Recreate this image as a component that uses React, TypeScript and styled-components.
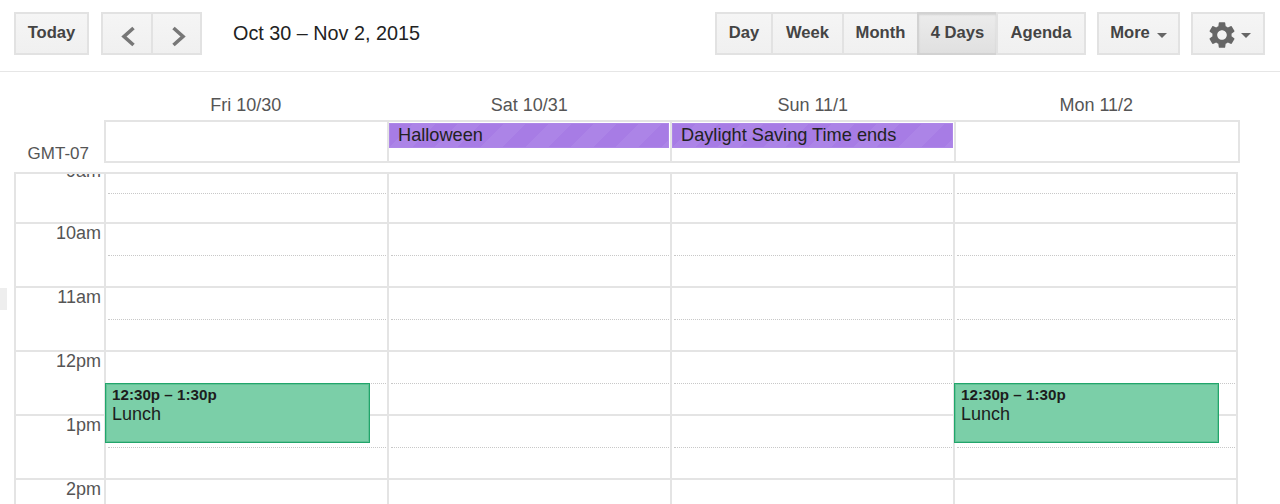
import React from 'react';
import styled, { createGlobalStyle } from 'styled-components';
import { MdSettings } from 'react-icons/md';

const GlobalStyle = createGlobalStyle`
  html, body {
    margin: 0;
    padding: 0;
    background: #fff;
  }
`;

const Page = styled.div`
  position: relative;
  display: flex;
  flex-direction: column;
  width: 1280px;
  height: 504px;
  overflow: hidden;
  background: #fff;
  font-family: "Liberation Sans", Arial, sans-serif;
  color: #222;
`;

const Toolbar = styled.div`
  display: flex;
  flex: none;
  align-items: flex-start;
  height: 72px;
  padding: 12px 15px 0 14px;
  box-sizing: border-box;
  border-bottom: 1px solid #e6e6e6;
`;

const Button = styled.div<{ $width: number; $active?: boolean }>`
  display: flex;
  align-items: center;
  justify-content: center;
  flex: none;
  width: ${({ $width }) => $width}px;
  height: 43px;
  padding-bottom: 1px;
  box-sizing: border-box;
  border: 2px solid ${({ $active }) => ($active ? '#d2d2d2' : '#e2e2e2')};
  background: ${({ $active }) =>
    $active ? 'linear-gradient(#ececec, #e0e0e0)' : 'linear-gradient(#f5f5f5, #f0f0f0)'};
  box-shadow: ${({ $active }) => ($active ? 'inset 0 1px 2px rgba(0, 0, 0, 0.1)' : 'none')};
  font-size: 16.6px;
  font-weight: bold;
  color: #444;
`;

const ButtonGroup = styled.div<{ $gap?: number }>`
  display: flex;
  flex: none;
  margin-left: ${({ $gap }) => $gap ?? 0}px;

  ${Button} + ${Button} {
    margin-left: -2px;
  }
`;

const DateRange = styled.div`
  margin-left: 31px;
  line-height: 43px;
  font-size: 19.8px;
  color: #222;
`;

const RightTools = styled.div`
  display: flex;
  margin-left: auto;
`;

const Caret = styled.span<{ $gap: number }>`
  display: inline-block;
  width: 0;
  height: 0;
  margin-left: ${({ $gap }) => $gap}px;
  margin-top: 4px;
  border-top: 5px solid #666;
  border-left: 5px solid transparent;
  border-right: 5px solid transparent;
`;

const Chevron = styled.svg<{ $shift: number }>`
  width: 15px;
  height: 21px;
  margin-top: 6px;
  margin-left: ${({ $shift }) => $shift}px;
  fill: none;
  stroke: #777;
  stroke-width: 3.6;
`;

const GearIcon = styled(MdSettings)`
  margin-top: 3px;
  color: #666;
`;

const SidebarTab = styled.div`
  position: absolute;
  left: 0;
  top: 288px;
  width: 7px;
  height: 22px;
  background: #eee;
`;

const DayHeads = styled.div`
  display: grid;
  flex: none;
  grid-template-columns: repeat(4, 283.5px);
  height: 48px;
  padding-left: 104px;
  box-sizing: border-box;
`;

const DayHead = styled.div`
  padding-top: 22px;
  text-align: center;
  font-size: 18px;
  line-height: 22px;
  color: #555;
`;

const AllDayRow = styled.div`
  display: flex;
  flex: none;
  height: 43px;
`;

const ZoneLabel = styled.div`
  display: flex;
  align-items: flex-end;
  justify-content: flex-end;
  flex: none;
  width: 89px;
  margin-right: 15px;
  font-size: 17px;
  line-height: 18px;
  color: #555;
`;

const AllDayBox = styled.div`
  display: grid;
  grid-template-columns: 283px 283px 284px 284px;
  width: 1136px;
  box-sizing: border-box;
  border: 2px solid #e4e4e4;
  border-left: 0;
`;

const AllDayCell = styled.div`
  padding: 1px 1px 0 0;
  border-left: 2px solid #e4e4e4;
`;

const AllDayChip = styled.div`
  height: 25px;
  padding-left: 8px;
  box-sizing: border-box;
  background: repeating-linear-gradient(135deg, #a77ce5 0 16px, #ac84e7 16px 32px);
  border: 1px solid #ae87e8;
  font-size: 18.2px;
  line-height: 23px;
  color: #222;
`;

const Scroller = styled.div`
  flex: 1;
  width: 1224px;
  margin: 9px 0 0 14px;
  box-sizing: border-box;
  overflow: hidden;
  border: 2px solid #e4e4e4;
  border-bottom: 0;
`;

const TimeGrid = styled.div`
  display: grid;
  grid-template-columns: 88px repeat(4, 283px);
  margin-top: -18px;
`;

const Gutter = styled.div`
  display: flex;
  flex-direction: column;
`;

const HourLabel = styled.div<{ $first?: boolean }>`
  height: ${({ $first }) => ($first ? 66 : 64)}px;
  padding: ${({ $first }) => ($first ? 4 : 0)}px 3px 0 0;
  box-sizing: border-box;
  border-top: 2px solid #e4e4e4;
  text-align: right;
  font-size: 18px;
  line-height: 18px;
  color: #555;
`;

const DayColumn = styled.div`
  position: relative;
  display: flex;
  flex-direction: column;
  border-left: 2px solid #e4e4e4;
`;

const HourSlot = styled.div<{ $first?: boolean }>`
  height: ${({ $first }) => ($first ? 66 : 64)}px;
  box-sizing: border-box;
  border-top: 2px solid #e4e4e4;
`;

const HalfLine = styled.div<{ $first?: boolean }>`
  height: ${({ $first }) => ($first ? 35 : 31)}px;
  margin: 0 1px 0 2px;
  border-bottom: 1px dotted #c8c8c8;
`;

const EventCard = styled.div`
  position: absolute;
  left: -1px;
  top: 227px;
  width: 265px;
  height: 60px;
  padding: 2px 6px;
  box-sizing: border-box;
  background: #7bcfa8;
  border: 1px solid #22a56b;
  box-shadow: inset 0 0 0 1px rgba(34, 165, 107, 0.3);
  color: #1d1d1d;
`;

const EventTime = styled.div`
  font-size: 15.2px;
  font-weight: bold;
  line-height: 18px;
`;

const EventTitle = styled.div`
  font-size: 18px;
  line-height: 20px;
`;

const days = ['Fri 10/30', 'Sat 10/31', 'Sun 11/1', 'Mon 11/2'];
const hours = ['9am', '10am', '11am', '12pm', '1pm', '2pm'];
const allDayEvents: Record<number, string> = {
  1: 'Halloween',
  2: 'Daylight Saving Time ends',
};
const lunchDays = [0, 3];

const App: React.FC = () => {
  return (
    <Page>
      <GlobalStyle />
      <Toolbar>
        <Button $width={75}>Today</Button>
        <ButtonGroup $gap={12}>
          <Button $width={52}>
            <Chevron viewBox="0 0 15 21" $shift={2}>
              <polyline points="12.5,2 3,10.5 12.5,19" />
            </Chevron>
          </Button>
          <Button $width={51}>
            <Chevron viewBox="0 0 15 21" $shift={4}>
              <polyline points="2.5,2 12,10.5 2.5,19" />
            </Chevron>
          </Button>
        </ButtonGroup>
        <DateRange>Oct 30 – Nov 2, 2015</DateRange>
        <RightTools>
          <ButtonGroup>
            <Button $width={58}>Day</Button>
            <Button $width={73}>Week</Button>
            <Button $width={77}>Month</Button>
            <Button $width={81} $active>4 Days</Button>
            <Button $width={90}>Agenda</Button>
          </ButtonGroup>
          <ButtonGroup $gap={11}>
            <Button $width={83}>
              More
              <Caret $gap={7} />
            </Button>
          </ButtonGroup>
          <ButtonGroup $gap={11}>
            <Button $width={74}>
              <GearIcon size={32} />
              <Caret $gap={3} />
            </Button>
          </ButtonGroup>
        </RightTools>
      </Toolbar>

      <DayHeads>
        {days.map((day) => (
          <DayHead key={day}>{day}</DayHead>
        ))}
      </DayHeads>

      <AllDayRow>
        <ZoneLabel>GMT-07</ZoneLabel>
        <AllDayBox>
          {days.map((day, i) => (
            <AllDayCell key={day}>
              {allDayEvents[i] && <AllDayChip>{allDayEvents[i]}</AllDayChip>}
            </AllDayCell>
          ))}
        </AllDayBox>
      </AllDayRow>

      <Scroller>
        <TimeGrid>
          <Gutter>
            {hours.map((hour, i) => (
              <HourLabel key={hour} $first={i === 0}>{hour}</HourLabel>
            ))}
          </Gutter>
          {days.map((day, d) => (
            <DayColumn key={day}>
              {hours.map((hour, i) => (
                <HourSlot key={hour} $first={i === 0}>
                  <HalfLine $first={i === 0} />
                </HourSlot>
              ))}
              {lunchDays.includes(d) && (
                <EventCard>
                  <EventTime>12:30p – 1:30p</EventTime>
                  <EventTitle>Lunch</EventTitle>
                </EventCard>
              )}
            </DayColumn>
          ))}
        </TimeGrid>
      </Scroller>

      <SidebarTab />
    </Page>
  );
};

export default App;
